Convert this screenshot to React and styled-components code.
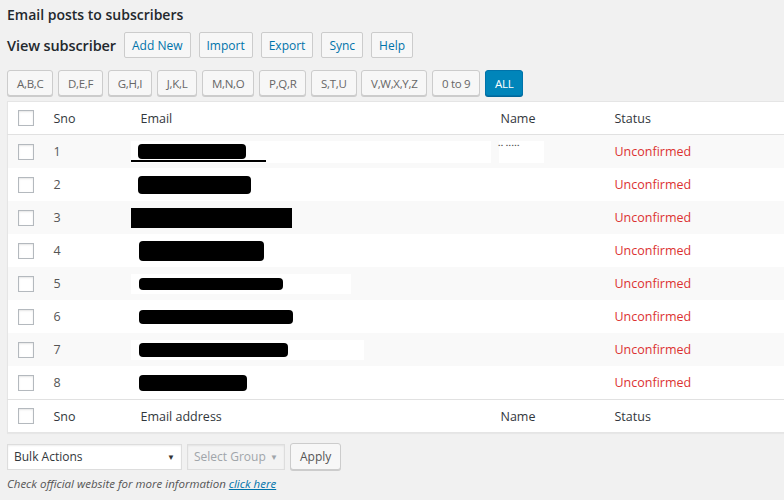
import React from 'react';
import styled, { createGlobalStyle } from 'styled-components';

const GlobalStyle = createGlobalStyle`
  html, body {
    margin: 0;
    padding: 0;
    background: #f1f1f1;
    overflow: hidden;
  }
  body {
    font-family: "Open Sans", "Noto Sans", sans-serif;
    font-size: 13px;
    color: #444;
  }
`;

const Page = styled.div`
  padding: 5px 0 0 7px;
  width: 820px;
`;

const Title = styled.h1`
  margin: 0;
  font-size: 14px;
  font-weight: 600;
  color: #23282d;
  line-height: 20px;
`;

const HeadRow = styled.div`
  display: flex;
  align-items: center;
  gap: 8px;
  margin-top: 7px;
`;

const SubTitle = styled.h2`
  margin: 0;
  font-size: 14.5px;
  font-weight: 600;
  color: #23282d;
  letter-spacing: -0.1px;
`;

const ActionButton = styled.button`
  height: 26px;
  padding: 0 7px;
  border: 1px solid #ccc;
  border-radius: 2px;
  background: #f7f7f7;
  color: #0073aa;
  font-family: inherit;
  font-size: 12px;
`;

const LetterBar = styled.div`
  display: flex;
  gap: 4.6px;
  margin-top: 12px;
`;

const LetterButton = styled.button`
  height: 26px;
  padding: 0 9px;
  border: 1px solid ${p => (p.$active ? '#0073aa' : '#ccc')};
  border-radius: 3px;
  background: ${p => (p.$active ? '#0085ba' : '#f7f7f7')};
  box-shadow: 0 1px 0 ${p => (p.$active ? '#006799' : '#ccc')};
  color: ${p => (p.$active ? '#fff' : '#666')};
  font-family: inherit;
  font-size: 11.5px;
  letter-spacing: -0.3px;
`;

const Table = styled.table`
  margin-top: 5px;
  width: 800px;
  border: 1px solid #e5e5e5;
  border-collapse: collapse;
  background: #fff;
  table-layout: fixed;
  box-shadow: 0 1px 1px rgba(0, 0, 0, 0.04);
`;

const HeadCell = styled.th`
  height: 32px;
  padding: 0 10px;
  text-align: left;
  font-weight: 400;
  color: #32373c;
  font-size: 12.5px;
  border-${p => (p.$foot ? 'top' : 'bottom')}: 1px solid #e1e1e1;
`;

const Row = styled.tr`
  background: ${p => (p.$odd ? '#f9f9f9' : '#fff')};
`;

const Cell = styled.td`
  height: 33px;
  padding: 0 10px;
  font-size: 12.5px;
  color: ${p => (p.$status ? '#dc3232' : '#555')};
  white-space: nowrap;
  overflow: hidden;
`;

const Check = styled.span`
  display: block;
  width: 14px;
  height: 14px;
  border: 1px solid #b4b9be;
  background: #fff;
  box-shadow: inset 0 1px 2px rgba(0, 0, 0, 0.1);
`;

const Patch = styled.span`
  display: inline-flex;
  align-items: center;
  vertical-align: middle;
  background: ${p => (p.$plain ? 'transparent' : '#fff')};
  height: ${p => p.$h || 20}px;
  width: ${p => p.$w}px;
  margin-left: ${p => p.$x}px;
`;

const Blob = styled.span`
  display: block;
  width: ${p => p.$w}px;
  height: ${p => p.$h}px;
  margin-left: ${p => p.$x}px;
  background: #000;
  border-radius: ${p => (p.$square ? '0' : '4px')};
  filter: ${p => (p.$square ? 'none' : 'blur(0.6px)')};
`;

const Underline = styled.span`
  display: block;
  position: absolute;
  left: 0;
  bottom: 1px;
  width: 140px;
  height: 2px;
  background: #000;
`;

const FirstPatch = styled.span`
  position: relative;
  display: inline-flex;
  align-items: center;
  vertical-align: middle;
  height: 22px;
  margin-left: -15px;
  width: 420px;
  background: #fff;
`;

const NameScrap = styled.span`
  display: inline-block;
  width: 45px;
  height: 22px;
  margin-left: -2px;
  background: #fff;
  vertical-align: middle;
  font-size: 5px;
  line-height: 8px;
  color: #555;
  letter-spacing: 1px;
`;

const Controls = styled.div`
  display: flex;
  gap: 5px;
  margin-top: 10px;
  align-items: center;
`;

const Select = styled.div`
  display: flex;
  align-items: center;
  justify-content: space-between;
  box-sizing: border-box;
  width: ${p => p.$w}px;
  height: 26px;
  padding: 0 6px 0 6px;
  border: 1px solid #ddd;
  background: ${p => (p.$disabled ? '#f3f3f3' : '#fff')};
  color: ${p => (p.$disabled ? '#a0a5aa' : '#32373c')};
  font-size: 12px;
  box-shadow: inset 0 1px 2px rgba(0, 0, 0, 0.07);
`;

const Caret = styled.span`
  font-size: 8px;
  color: ${p => (p.$disabled ? '#a0a5aa' : '#333')};
`;

const ApplyButton = styled.button`
  height: 27px;
  padding: 0 9px;
  border: 1px solid #ccc;
  border-radius: 3px;
  background: #f7f7f7;
  box-shadow: 0 1px 0 #ccc;
  color: #555;
  font-family: inherit;
  font-size: 12px;
`;

const Note = styled.p`
  margin: 6px 0 0;
  font-style: italic;
  color: #555;
  font-size: 11.5px;
`;

const Link = styled.a`
  color: #0073aa;
  text-decoration: underline;
`;

const letters = ['A,B,C', 'D,E,F', 'G,H,I', 'J,K,L', 'M,N,O', 'P,Q,R', 'S,T,U', 'V,W,X,Y,Z', '0 to 9'];

const redactions = [
  null,
  { w: 113, h: 18, x: -3 },
  { w: 164, h: 20, x: -13, square: true },
  { w: 125, h: 20, x: -2 },
  { w: 144, h: 12, x: 8, patch: 220, px: -10 },
  { w: 154, h: 14, x: -2 },
  { w: 149, h: 14, x: 16, patch: 241, px: -18 },
  { w: 108, h: 16, x: -2 },
];

const Email = ({ r, i }) => {
  if (i === 0) {
    return (
      <FirstPatch>
        <Blob $w={108} $h={15} $x={12} />
        <Underline />
      </FirstPatch>
    );
  }
  if (r.patch) {
    return (
      <Patch $w={r.patch} $x={r.px}>
        <Blob $w={r.w} $h={r.h} $x={r.x} />
      </Patch>
    );
  }
  return (
    <Patch $plain $w={r.w + 20} $h={22} $x={0}>
      <Blob $w={r.w} $h={r.h} $x={r.x} $square={r.square} />
    </Patch>
  );
};

const App = () => {
  return (
    <Page>
      <GlobalStyle />
      <Title>Email posts to subscribers</Title>
      <HeadRow>
        <SubTitle>View subscriber</SubTitle>
        <ActionButton>Add New</ActionButton>
        <ActionButton>Import</ActionButton>
        <ActionButton>Export</ActionButton>
        <ActionButton>Sync</ActionButton>
        <ActionButton>Help</ActionButton>
      </HeadRow>
      <LetterBar>
        {letters.map(l => (
          <LetterButton key={l}>{l}</LetterButton>
        ))}
        <LetterButton $active>ALL</LetterButton>
      </LetterBar>
      <Table>
        <colgroup>
          <col style={{ width: 36 }} />
          <col style={{ width: 87 }} />
          <col style={{ width: 360 }} />
          <col style={{ width: 114 }} />
          <col />
        </colgroup>
        <thead>
          <tr>
            <HeadCell><Check /></HeadCell>
            <HeadCell>Sno</HeadCell>
            <HeadCell>Email</HeadCell>
            <HeadCell>Name</HeadCell>
            <HeadCell>Status</HeadCell>
          </tr>
        </thead>
        <tbody>
          {redactions.map((r, i) => (
            <Row key={i} $odd={i % 2 === 0}>
              <Cell><Check /></Cell>
              <Cell>{i + 1}</Cell>
              <Cell><Email r={r} i={i} /></Cell>
              <Cell>{i === 0 && <NameScrap>▪▪ ▪▪▪▪▪</NameScrap>}</Cell>
              <Cell $status>Unconfirmed</Cell>
            </Row>
          ))}
        </tbody>
        <tfoot>
          <tr>
            <HeadCell $foot><Check /></HeadCell>
            <HeadCell $foot>Sno</HeadCell>
            <HeadCell $foot>Email address</HeadCell>
            <HeadCell $foot>Name</HeadCell>
            <HeadCell $foot>Status</HeadCell>
          </tr>
        </tfoot>
      </Table>
      <Controls>
        <Select $w={175}>
          Bulk Actions <Caret>▼</Caret>
        </Select>
        <Select $w={98} $disabled>
          Select Group <Caret $disabled>▼</Caret>
        </Select>
        <ApplyButton>Apply</ApplyButton>
      </Controls>
      <Note>
        Check official website for more information <Link href="#">click here</Link>
      </Note>
    </Page>
  );
};

export default App;
